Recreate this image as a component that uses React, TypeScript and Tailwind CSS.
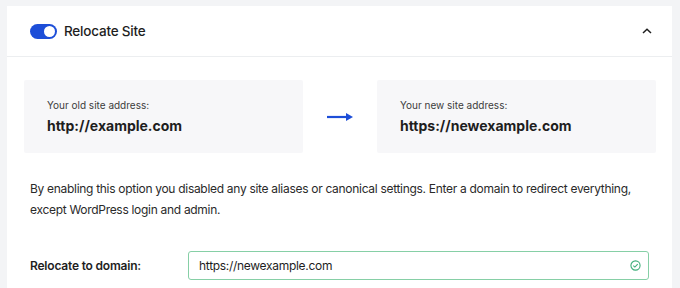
export default function App() {
    return (
        <div className="w-[680px] h-[288px] overflow-hidden bg-[#f3f4f6] pl-[7px] pt-[6px] pr-[8px] font-['Inter',sans-serif] text-[#1e1e1e]">
            <div className="bg-white h-[300px]">
                {/* Header */}
                <div className="h-[51px] flex items-center justify-between pl-[23px] pr-[20px] border-b border-[#eceef0]">
                    <div className="flex items-center gap-[7px]">
                        <span className="w-[27px] h-[15px] rounded-full bg-[#1d4ed8] flex items-center justify-end pr-[2px]">
                            <span className="w-[11px] h-[11px] rounded-full bg-white" />
                        </span>
                        <span className="text-[13.5px] font-medium tracking-[-0.2px]">Relocate Site</span>
                    </div>
                    <svg width="10" height="6" viewBox="0 0 10 6">
                        <path d="M1 5L5 1.2L9 5" fill="none" stroke="#1e1e1e" strokeWidth="1.5" />
                    </svg>
                </div>

                {/* Addresses */}
                <div className="flex items-center pl-[17px] pr-[16px] pt-[23px]">
                    <div className="w-[279px] shrink-0 h-[73px] bg-[#f7f7f9] rounded-[2px] pl-[23px] pt-[18px]">
                        <div className="text-[10px] text-[#3c3c3c] leading-[14px]">Your old site address:</div>
                        <div className="text-[14px] font-bold leading-[20px] mt-[4px]">http://example.com</div>
                    </div>
                    <div className="w-[74px] shrink-0 flex justify-center">
                        <svg width="28" height="10" viewBox="0 0 28 10">
                            <path d="M1 5H21" stroke="#1d4ed8" strokeWidth="2.2" />
                            <path d="M20 1L27 5L20 9Z" fill="#1d4ed8" />
                        </svg>
                    </div>
                    <div className="w-[279px] shrink-0 h-[73px] bg-[#f7f7f9] rounded-[2px] pl-[23px] pt-[18px]">
                        <div className="text-[10px] text-[#3c3c3c] leading-[14px]">Your new site address:</div>
                        <div className="text-[14px] font-bold leading-[20px] mt-[4px]">https://newexample.com</div>
                    </div>
                </div>

                {/* Description */}
                <p className="pl-[23px] pr-[20px] mt-[25px] text-[12px] tracking-[-0.3px] leading-[21px] text-[#2a2a2a]">
                    By enabling this option you disabled any site aliases or canonical settings. Enter a domain to redirect everything, except WordPress login and admin.
                </p>

                {/* Domain field */}
                <div className="flex items-center pl-[23px] mt-[31px]">
                    <label className="w-[158px] text-[12px] tracking-[-0.2px] font-semibold text-[#1e1e1e]">Relocate to domain:</label>
                    <div className="w-[461px] h-[29px] border border-[#86cfa6] rounded-[3px] flex items-center justify-between pl-[10px] pr-[7px]">
                        <span className="text-[12px] tracking-[-0.3px] text-[#1e1e1e]">https://newexample.com</span>
                        <svg width="11" height="11" viewBox="0 0 12 12">
                            <circle cx="6" cy="6" r="5" fill="none" stroke="#3fae7a" strokeWidth="1.2" />
                            <path d="M3.6 6.1L5.3 7.7L8.4 4.5" fill="none" stroke="#3fae7a" strokeWidth="1.2" />
                        </svg>
                    </div>
                </div>
            </div>
        </div>
    );
}
